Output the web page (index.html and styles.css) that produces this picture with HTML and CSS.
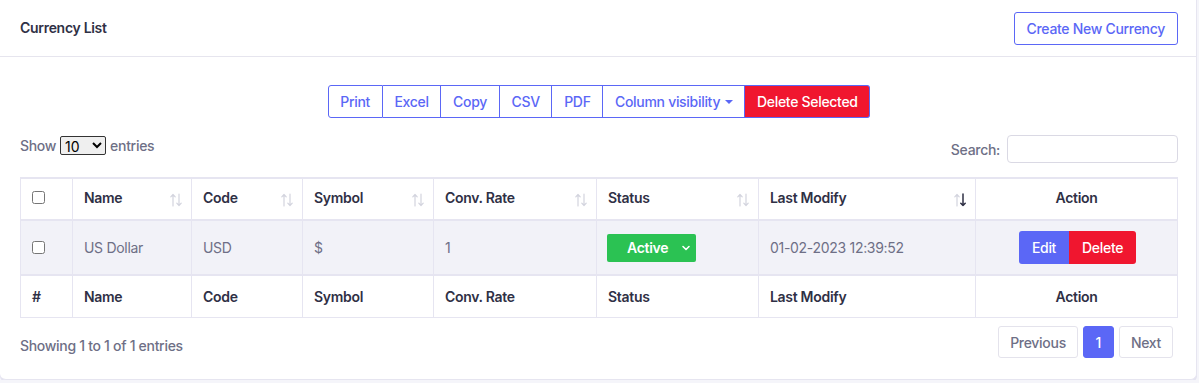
FILE: index.html
```html
<!DOCTYPE html>
<html lang="en">
<head>
  <meta charset="UTF-8">
  <meta name="viewport" content="width=device-width, initial-scale=1.0">
  <title>Currency List</title>
  <link rel="stylesheet" href="styles.css">
</head>
<body>

  <div class="card">
    <div class="card-header">
      <h5 class="card-title">Currency List</h5>
      <button class="btn-outline">Create New Currency</button>
    </div>

    <div class="card-body">
      <div class="dt-buttons">
        <button>Print</button>
        <button>Excel</button>
        <button>Copy</button>
        <button>CSV</button>
        <button>PDF</button>
        <button>Column visibility <span class="caret"></span></button>
        <button class="danger">Delete Selected</button>
      </div>

      <div class="dt-top">
        <label class="length">Show
          <select>
            <option>10</option>
            <option>25</option>
            <option>50</option>
          </select>
          entries</label>
        <label class="search">Search: <input type="search"></label>
      </div>

      <table class="data-table">
        <colgroup>
          <col style="width: 52px">
          <col style="width: 119px">
          <col style="width: 111px">
          <col style="width: 131px">
          <col style="width: 163px">
          <col style="width: 162px">
          <col style="width: 217px">
          <col>
        </colgroup>
        <thead>
          <tr>
            <th><input type="checkbox"></th>
            <th class="sorting">Name <svg class="sort" viewBox="0 0 12 14"><path d="M3 13V1.5M0.8 3.8L3 1.5l2.2 2.3M9 1v11.5M6.8 10.2L9 12.5l2.2-2.3"/></svg></th>
            <th class="sorting">Code <svg class="sort" viewBox="0 0 12 14"><path d="M3 13V1.5M0.8 3.8L3 1.5l2.2 2.3M9 1v11.5M6.8 10.2L9 12.5l2.2-2.3"/></svg></th>
            <th class="sorting">Symbol <svg class="sort" viewBox="0 0 12 14"><path d="M3 13V1.5M0.8 3.8L3 1.5l2.2 2.3M9 1v11.5M6.8 10.2L9 12.5l2.2-2.3"/></svg></th>
            <th class="sorting">Conv. Rate <svg class="sort" viewBox="0 0 12 14"><path d="M3 13V1.5M0.8 3.8L3 1.5l2.2 2.3M9 1v11.5M6.8 10.2L9 12.5l2.2-2.3"/></svg></th>
            <th class="sorting">Status <svg class="sort" viewBox="0 0 12 14"><path d="M3 13V1.5M0.8 3.8L3 1.5l2.2 2.3M9 1v11.5M6.8 10.2L9 12.5l2.2-2.3"/></svg></th>
            <th class="sorting">Last Modify <svg class="sort" viewBox="0 0 12 14"><path d="M3 13V1.5M0.8 3.8L3 1.5l2.2 2.3"/><path class="active" d="M9 1v11.5M6.8 10.2L9 12.5l2.2-2.3"/></svg></th>
            <th class="center">Action</th>
          </tr>
        </thead>
        <tbody>
          <tr>
            <td><input type="checkbox"></td>
            <td>US Dollar</td>
            <td>USD</td>
            <td>$</td>
            <td>1</td>
            <td>
              <span class="status">Active
                <svg width="10" height="10" viewBox="0 0 10 10"><path d="M2 3.5l3 3 3-3" fill="none" stroke="#fff" stroke-width="1.6" stroke-linecap="round" stroke-linejoin="round"/></svg>
              </span>
            </td>
            <td>01-02-2023 12:39:52</td>
            <td class="center">
              <span class="btn-group">
                <button class="edit">Edit</button><button class="delete">Delete</button>
              </span>
            </td>
          </tr>
        </tbody>
        <tfoot>
          <tr>
            <th>#</th>
            <th>Name</th>
            <th>Code</th>
            <th>Symbol</th>
            <th>Conv. Rate</th>
            <th>Status</th>
            <th>Last Modify</th>
            <th class="center">Action</th>
          </tr>
        </tfoot>
      </table>

      <div class="dt-bottom">
        <div class="info">Showing 1 to 1 of 1 entries</div>
        <div class="paging">
          <button class="page">Previous</button>
          <button class="page current">1</button>
          <button class="page">Next</button>
        </div>
      </div>
    </div>
  </div>

</body>
</html>
```

FILE: styles.css
```css
body { margin: 0; font-family: Inter, "Noto Sans", sans-serif; font-size: 14px; letter-spacing: -0.3px; color: #6e6f86; background: #f5f5fa; }
button { font-family: inherit; font-size: 14px; letter-spacing: -0.3px; cursor: pointer; }

.card { width: 1197px; height: 380px; box-sizing: border-box; background: #fff; border: 1px solid #e6e5f0; border-top: none; border-left: none; border-radius: 0 0 6px 6px; box-shadow: 0 2px 0 #e4e3f0; }
.card-header { height: 57px; box-sizing: border-box; display: flex; align-items: center; justify-content: space-between; padding: 0 18px 0 20px; border-bottom: 1px solid #e6e5ee; }
.card-title { margin: 0 0 2px; font-size: 14px; font-weight: 600; color: #2f3045; }
.btn-outline { height: 33px; padding: 0 12px; background: #fff; color: #5b67f6; border: 1px solid #5b67f6; border-radius: 3px; font-weight: 500; margin-top: 1px; }

.card-body { padding: 28px 18px 0 20px; }

.dt-buttons { display: flex; justify-content: center; }
.dt-buttons button { height: 33px; padding: 0 11.7px; background: #fff; color: #5b67f6; border: 1px solid #5b67f6; border-left: none; font-weight: 500; }
.dt-buttons button:first-child { border-left: 1px solid #5b67f6; border-radius: 3px 0 0 3px; }
.dt-buttons button:last-child { border-radius: 0 3px 3px 0; }
.dt-buttons .danger { background: #f0162f; color: #fff; border-color: #5b67f6; }
.caret { display: inline-block; width: 0; height: 0; border-left: 4px solid transparent; border-right: 4px solid transparent; border-top: 4px solid #5b67f6; vertical-align: 3px; margin-left: 1px; }

.dt-top { display: flex; justify-content: space-between; align-items: flex-start; margin-top: 17px; height: 42px; }
.length { display: flex; align-items: center; gap: 4px; margin-top: 1px; font-weight: 500; color: #6e6f86; }
.length select { height: 19px; font-family: inherit; font-size: 14px; color: #000; border: 1px solid #333; border-radius: 2px; padding: 0; width: 46px; }
.search { display: flex; align-items: center; gap: 7px; font-weight: 500; color: #6e6f86; }
.search input { width: 171px; height: 28px; box-sizing: border-box; border: 1px solid #dad9e4; border-radius: 4px; }

.data-table { width: 1158px; border-collapse: collapse; table-layout: fixed; border: 1px solid #e6e5f1; border-top: 2px solid #e6e5f1; }
.data-table th, .data-table td { border: 1px solid #e6e5f1; padding: 0 11px; text-align: left; }
.data-table thead th { height: 37px; padding-bottom: 3px; font-weight: 600; color: #2f3045; position: relative; border-bottom: 2px solid #e6e5f1; }
.data-table tbody td { height: 53px; background: #f2f2f8; color: #6e6f86; }
.data-table tfoot th { height: 41px; font-weight: 600; color: #2f3045; border-top: 2px solid #e6e5f1; }
.data-table .center { text-align: center; }
.data-table input[type="checkbox"] { margin: 0; width: 13px; height: 13px; vertical-align: -1px; }

.sort { position: absolute; right: 9px; top: 14px; width: 12px; height: 14px; fill: none; stroke: #d3d4de; stroke-width: 1.2; stroke-linecap: round; stroke-linejoin: round; }
.sort .active { stroke: #2f3045; stroke-width: 1.5; }

.status { display: inline-flex; align-items: center; justify-content: space-between; width: 89px; height: 28px; box-sizing: border-box; padding: 0 5px 0 20px; background: #2bc253; color: #fff; font-weight: 600; border-radius: 2px; margin-left: -1px; }

.btn-group { display: inline-flex; margin-left: 2px; }
.btn-group button { height: 33px; border: none; color: #fff; font-weight: 500; }
.btn-group .edit { background: #5b67f6; padding: 0 12px; border-radius: 3px 0 0 3px; width: 50px; }
.btn-group .delete { background: #f0162f; padding: 0 13px; border-radius: 0 3px 3px 0; width: 67px; }

.dt-bottom { display: flex; justify-content: space-between; align-items: center; margin-top: 8px; }
.info { font-weight: 500; color: #6e6f86; margin-top: 6px; }
.paging { display: flex; gap: 5px; margin-right: 5px; }
.page { height: 32px; padding: 0 11px; background: #fff; border: 1px solid #e4e3ec; border-radius: 3px; color: #6e6f86; font-weight: 500; }
.page.current { background: #5b67f6; border-color: #5b67f6; color: #fff; width: 31px; padding: 0; }
```
